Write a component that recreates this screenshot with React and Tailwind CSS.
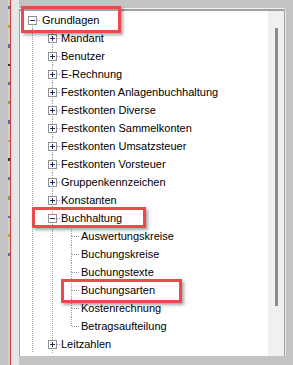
import React from 'react';

const items = [
  { t: 'Grundlagen', l: 0, exp: 'minus' },
  { t: 'Mandant', l: 1, exp: 'plus' },
  { t: 'Benutzer', l: 1, exp: 'plus' },
  { t: 'E-Rechnung', l: 1, exp: 'plus' },
  { t: 'Festkonten Anlagenbuchhaltung', l: 1, exp: 'plus' },
  { t: 'Festkonten Diverse', l: 1, exp: 'plus' },
  { t: 'Festkonten Sammelkonten', l: 1, exp: 'plus' },
  { t: 'Festkonten Umsatzsteuer', l: 1, exp: 'plus' },
  { t: 'Festkonten Vorsteuer', l: 1, exp: 'plus' },
  { t: 'Gruppenkennzeichen', l: 1, exp: 'plus' },
  { t: 'Konstanten', l: 1, exp: 'plus' },
  { t: 'Buchhaltung', l: 1, exp: 'minus' },
  { t: 'Auswertungskreise', l: 2 },
  { t: 'Buchungskreise', l: 2 },
  { t: 'Buchungstexte', l: 2 },
  { t: 'Buchungsarten', l: 2 },
  { t: 'Kostenrechnung', l: 2 },
  { t: 'Betragsaufteilung', l: 2, last: true },
  { t: 'Leitzahlen', l: 1, exp: 'plus' },
];

// x of the connector line and where the label starts, per level (inside the white area)
const lineX = [12, 32, 51];
const textX = [23, 42, 62];

const dot = { stroke: '#a0a0a0', strokeWidth: 1, strokeDasharray: '1 1', shapeRendering: 'crispEdges' };

function Connectors({ item, first }) {
  const w = textX[item.l] - 1;
  const cx = lineX[item.l] + 0.5;
  const ancestors = [];
  for (let i = 0; i < item.l; i++) ancestors.push(lineX[i] + 0.5);

  return (
    <svg width={w} height="18" className="shrink-0 block">
      {ancestors.map((x) => (
        <line key={x} x1={x} y1="0" x2={x} y2="18" style={dot} />
      ))}
      {!first && <line x1={cx} y1="0" x2={cx} y2="9" style={dot} />}
      {!item.last && <line x1={cx} y1="9" x2={cx} y2="18" style={dot} />}
      <line x1={cx} y1="9.5" x2={w - 1} y2="9.5" style={dot} />
      {item.exp && (
        <g shapeRendering="crispEdges">
          <rect x={cx - 4} y="5.5" width="8" height="8" fill="#ffffff" stroke="#929292" />
          <line x1={cx - 2.5} y1="9.5" x2={cx + 2.5} y2="9.5" stroke="#1e2a5a" />
          {item.exp === 'plus' && <line x1={cx} y1="7" x2={cx} y2="12" stroke="#1e2a5a" />}
        </g>
      )}
    </svg>
  );
}

export default function App() {
  return (
    <div
      className="relative flex w-[293px] h-[365px] overflow-hidden bg-[#c3c3c3] text-[11px] text-black"
      style={{ fontFamily: '"Liberation Sans", Arial, sans-serif' }}
    >
      {/* edge of the window behind */}
      <div className="w-[8px] shrink-0" />
      <div className="w-[2px] shrink-0 flex flex-col gap-[16px] pt-[6px] bg-[#d0d0d0]">
        <div className="h-[3px] bg-[#5a6ab0]" />
        <div className="h-[3px] bg-[#c8a040]" />
        <div className="h-[4px] bg-[#5a6ab0]" />
        <div className="h-[2px] bg-[#333]" />
        <div className="h-[3px] bg-[#5a6ab0]" />
        <div className="h-[3px] bg-[#8aa050]" />
        <div className="h-[4px] bg-[#5a6ab0]" />
        <div className="h-[2px] bg-[#c8a040]" />
        <div className="h-[3px] bg-[#333]" />
        <div className="h-[3px] bg-[#5a6ab0]" />
        <div className="h-[4px] bg-[#8aa050]" />
        <div className="h-[2px] bg-[#5a6ab0]" />
        <div className="h-[3px] bg-[#c8a040]" />
        <div className="h-[3px] bg-[#5a6ab0]" />
      </div>
      <div className="w-[1px] shrink-0 bg-[#d23c3c]" />
      <div className="w-[8px] shrink-0 bg-[#e6e6e6]" />

      {/* tree panel */}
      <div className="flex flex-col w-[266px] shrink-0">
        <div className="h-[8px] shrink-0" />
        <div className="h-[348px] flex flex-col border-t border-[#eeeeee]">
          <div className="flex flex-1 border-t-2 border-l border-r border-[#a0a0a0] min-h-0">
            <div className="flex-1 bg-white flex flex-col overflow-hidden">
              {items.map((item, i) => (
                <div key={item.t} className="flex h-[18px] items-center shrink-0">
                  <Connectors item={item} first={i === 0} />
                  <span className="whitespace-nowrap leading-[18px]">{item.t}</span>
                </div>
              ))}
            </div>
            <div className="w-[16px] shrink-0 bg-[#f0f0f0] pt-[17px] flex justify-center">
              <div className="w-[3px] h-[278px] bg-[#8b8b8b]" />
            </div>
          </div>
        </div>
      </div>
      <div className="w-[1px] shrink-0 flex flex-col">
        <div className="h-[9px]" />
        <div className="h-[347px] bg-[#ececec]" />
      </div>

      {/* red annotation frames */}
      <div className="absolute left-[21px] top-[6px] w-[100px] h-[27px] border-[3px] border-[#f0474d] shadow-[2px_2px_3px_rgba(0,0,0,0.35)]" />
      <div className="absolute left-[32px] top-[207px] w-[114px] h-[21px] border-[3px] border-[#f0474d] shadow-[2px_2px_3px_rgba(0,0,0,0.35)]" />
      <div className="absolute left-[61px] top-[279px] w-[121px] h-[24px] border-[3px] border-[#f0474d] shadow-[2px_2px_3px_rgba(0,0,0,0.35)]" />
    </div>
  );
}
